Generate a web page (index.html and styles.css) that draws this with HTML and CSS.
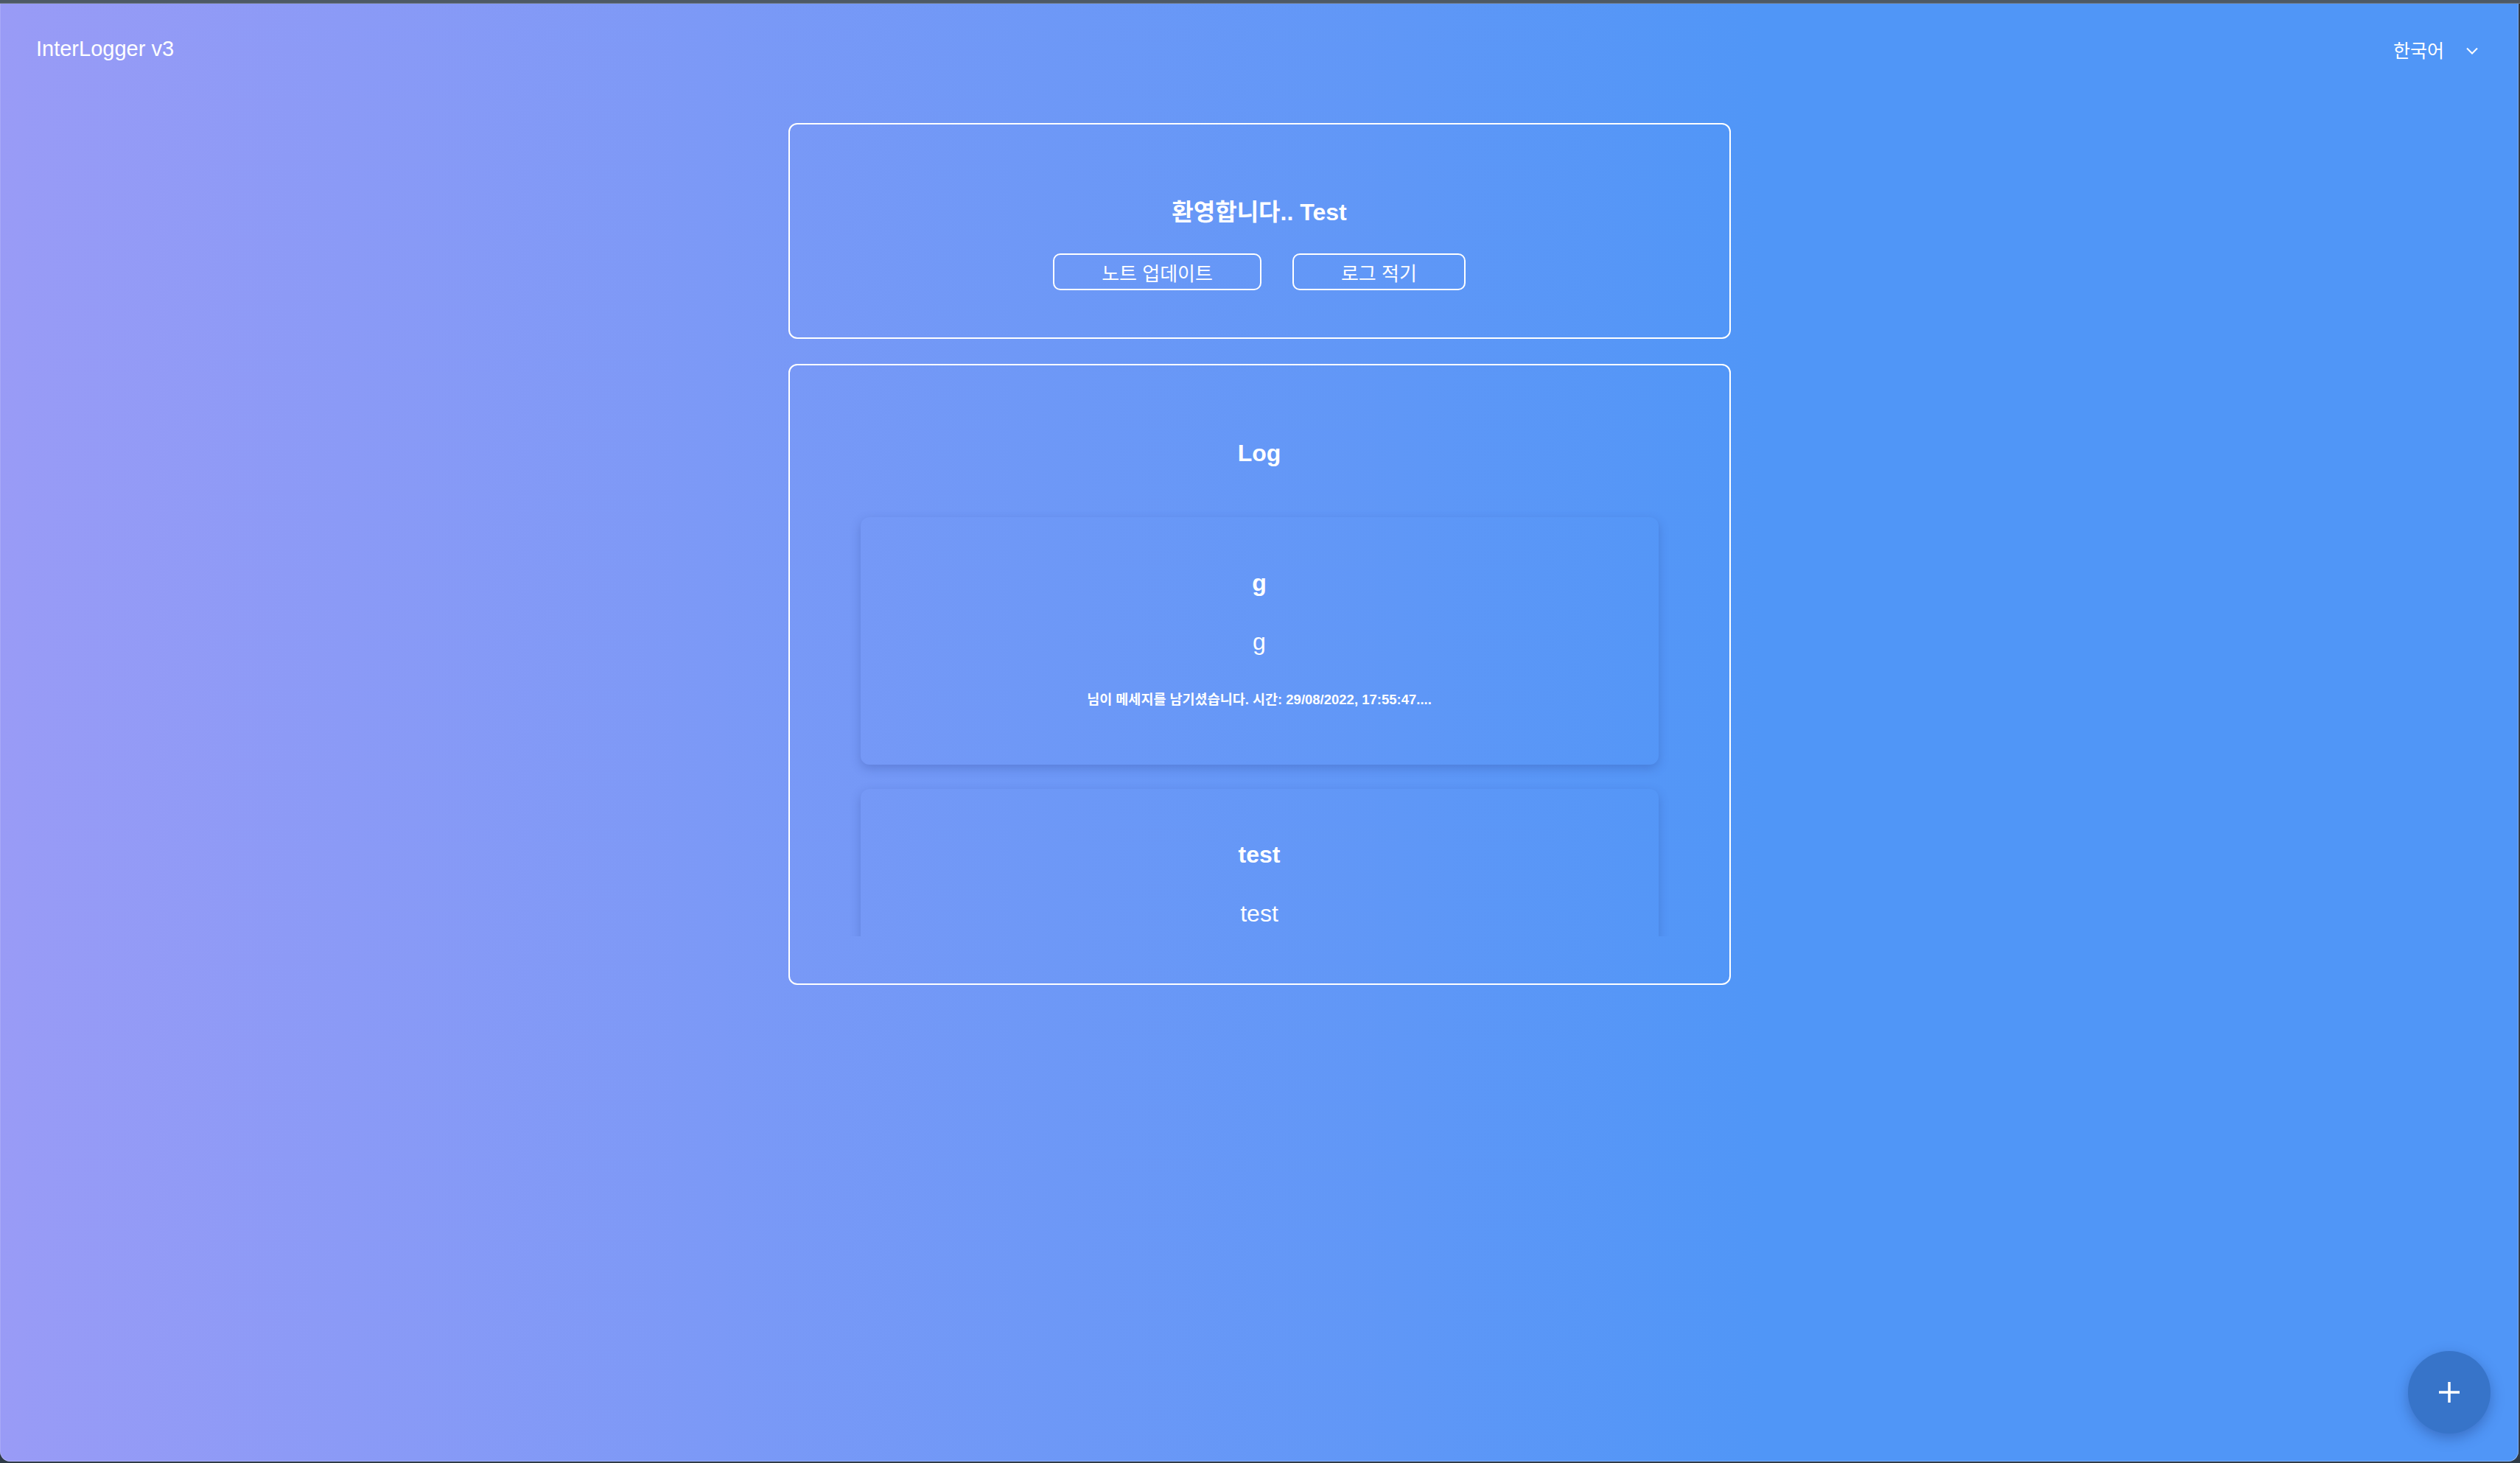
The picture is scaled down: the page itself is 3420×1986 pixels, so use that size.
FILE: index.html
```html
<!DOCTYPE html>
<html lang="ko">
<head>
	<meta charset="UTF-8">
	<title>InterLogger v3</title>
	<link rel="stylesheet" href="styles.css">
</head>
<body>
	<div class="window">
		<!-- 상단 바 -->
		<header class="topbar">
			<div class="brand">InterLogger v3</div>
			<div class="lang">
				<span>한국어</span>
				<svg class="chevron" width="16" height="10" viewBox="0 0 16 10"><polyline points="1,1.5 8,8.5 15,1.5" fill="none" stroke="#fff" stroke-width="2"/></svg>
			</div>
		</header>

		<main class="content">
			<!-- 환영 카드 -->
			<section class="card welcome">
				<h2 class="card-title">환영합니다.. Test</h2>
				<div class="actions">
					<button class="btn">노트 업데이트</button>
					<button class="btn">로그 적기</button>
				</div>
			</section>

			<!-- 로그 목록 -->
			<section class="card log">
				<h2 class="card-title">Log</h2>
				<div class="log-list">
					<div class="log-item">
						<h3 class="item-title">g</h3>
						<p class="item-body">g</p>
						<p class="item-meta">님이 메세지를 남기셨습니다. 시간: 29/08/2022, 17:55:47....</p>
					</div>
					<div class="log-item">
						<h3 class="item-title">test</h3>
						<p class="item-body">test</p>
						<p class="item-meta">님이 메세지를 남기셨습니다. 시간: 29/08/2022, 17:54:12....</p>
					</div>
				</div>
			</section>
		</main>

		<button class="fab"><svg width="28" height="28" viewBox="0 0 28 28"><path d="M14 0V28M0 14H28" stroke="#fff" stroke-width="3.5"/></svg></button>
	</div>
</body>
</html>
```

FILE: styles.css
```css
*{
	margin: 0;
	padding: 0;
	box-sizing: border-box;
}
html, body{
	height: 100%;
}
body{
	padding-top: 5px;
	background: linear-gradient(#4d5965 0, #4d5965 4px, #6e7882 4px, #6e7882 5px, #2f3b48 5px);
	font-family: "Liberation Sans", "Noto Sans CJK KR", sans-serif;
	color: #fff;
}
.window{
	position: relative;
	height: 1979px;
	margin-right: 2px;
	border-radius: 0 0 14px 14px;
	overflow: hidden;
	background: linear-gradient(90deg, #999bf6 0%, #5096f7 70%, #5096f7 100%);
	box-shadow: inset 1px 0 0 rgba(255,255,255,0.15), inset -1px 0 0 rgba(255,255,255,0.25), inset 0 -1px 0 rgba(255,255,255,0.25);
}

/* 상단 바 */
.topbar{
	display: flex;
	justify-content: space-between;
	align-items: center;
	height: 81px;
	padding: 41px 55px 0 49px;
}
.brand{
	font-size: 29px;
	line-height: 40px;
}
.lang{
	display: flex;
	align-items: center;
	gap: 30px;
	margin-top: 6px;
	font-size: 25px;
	line-height: 30px;
}
.chevron{
	display: block;
}

/* 카드 */
.content{
	display: flex;
	flex-direction: column;
	align-items: center;
	gap: 34px;
	margin-top: 81px;
}
.card{
	width: 1279px;
	border: 2px solid #fff;
	border-radius: 12px;
	text-align: center;
}
.card-title{
	font-size: 32px;
	line-height: 40px;
	font-weight: 700;
}
.welcome{
	padding: 99px 0 64px;
}
.actions{
	display: flex;
	justify-content: center;
	gap: 42px;
	margin-top: 36px;
}
.btn{
	height: 50px;
	padding: 0 64px;
	border: 2px solid #fff;
	border-radius: 10px;
	background: none;
	color: #fff;
	font-family: inherit;
	font-size: 26px;
	cursor: pointer;
}

/* 로그 */
.log{
	padding: 99px 0 64px;
}
.log-list{
	height: 601px;
	margin-top: 35px;
	padding: 32px 96px 0;
	overflow-y: auto;
	scrollbar-width: none;
}
.log-item{
	margin-bottom: 33px;
	padding: 69px 24px 76px;
	border-radius: 12px;
	box-shadow: 0 5px 14px rgba(40,60,140,0.28);
}
.item-title{
	font-size: 32px;
	line-height: 40px;
	font-weight: 700;
}
.item-body{
	margin-top: 40px;
	font-size: 32px;
	line-height: 40px;
}
.item-meta{
	margin-top: 47px;
	font-size: 18.5px;
	line-height: 24px;
	font-weight: 700;
}

/* 추가 버튼 */
.fab{
	position: absolute;
	right: 38px;
	bottom: 38px;
	display: flex;
	align-items: center;
	justify-content: center;
	width: 112px;
	height: 112px;
	border: none;
	border-radius: 50%;
	background-color: #3774c9;
	box-shadow: 0 6px 18px rgba(20,40,100,0.35);
	cursor: pointer;
}
.fab svg{
	display: block;
}
```
